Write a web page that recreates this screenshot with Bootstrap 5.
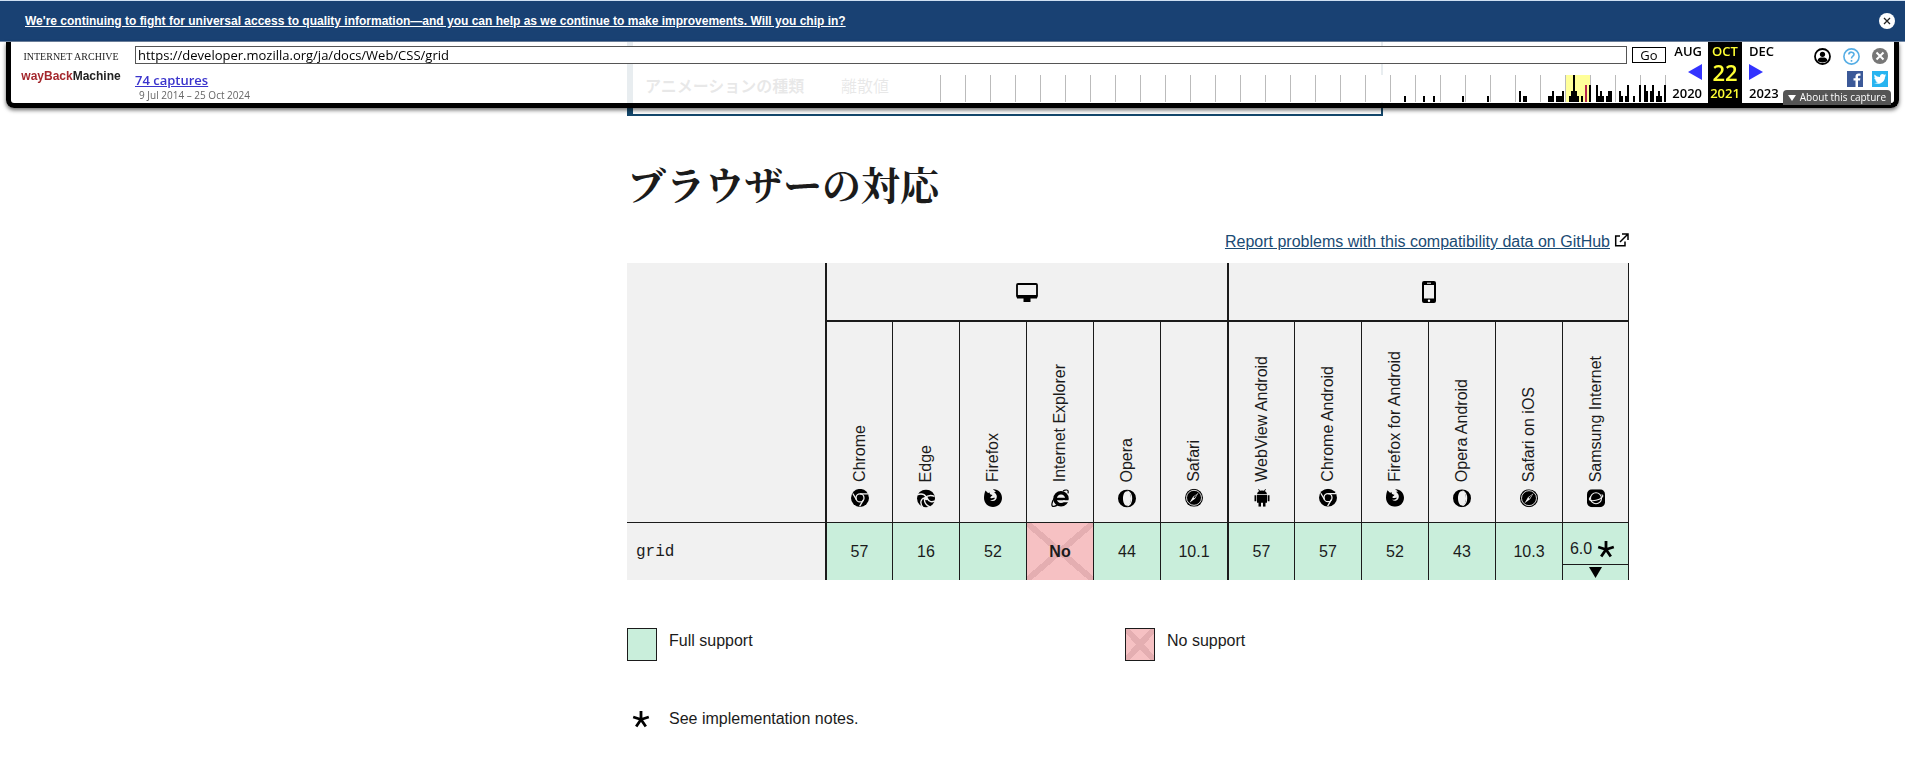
<!DOCTYPE html>
<html lang="ja">
<head>
<meta charset="utf-8">
<meta name="viewport" content="width=device-width, initial-scale=1">
<title>grid - CSS | MDN</title>
<link href="https://cdn.jsdelivr.net/npm/bootstrap@5.3.0/dist/css/bootstrap.min.css" rel="stylesheet">
<style>
  :root { --ink: #1b1b1b; --navy: #194173; --mdn-blue: #14476b; --yes: #c9eedb; --no: #f6c1c3; --cross: #e4aeb1; }
  body { font-family: "Liberation Sans", "Noto Sans CJK JP", sans-serif; color: var(--ink); background: #fff; }
  button, input { border-radius: 0; }

  /* donation banner */
  .donate { background: var(--navy); border-top: 1px solid #cfe0f2; border-bottom: 1px solid #7288a5; height: 42px; padding: 0 10px 0 25px; }
  .donate a { color: #fff; font-size: 12px; font-weight: 700; line-height: 16px; }
  .round-close { width: 16px; height: 16px; }

  /* archive toolbar */
  .wm-bar { margin: 0 6px; height: 66px; border: solid #000; border-width: 0 5px 5px; border-radius: 0 0 8px 8px; background: rgba(255,255,255,.9); box-shadow: 0 2px 4px rgba(0,0,0,.6); font-family: "Open Sans", "Noto Sans", sans-serif; color: #000; }
  .wm-logo { width: 100px; margin: 0 14px 0 10px; padding-top: 10px; color: #222; text-decoration: none; }
  .wm-logo .org { font-family: "Liberation Serif", serif; font-size: 10px; line-height: 10px; }
  .wm-logo .name { font-family: "Liberation Sans", sans-serif; font-size: 12px; line-height: 28px; font-weight: 700; }
  .wm-logo .red { color: #a4272d; }
  .wm-url { height: 18px; border: 1px solid #555; padding: 0 2px; font-size: 13px; line-height: 16px; min-width: 0; background: #fff; color: #000; }
  .wm-go { width: 34px; height: 16px; border: 1px solid #000; background: #fff; padding: 0; font-size: 13px; line-height: 14px; }
  .wm-count { font-size: 13px; font-weight: 600; line-height: 16px; color: #3a33cc; }
  .wm-range { font-size: 10px; line-height: 14px; color: #666; padding-left: 4px; }
  .spark { width: 726px; height: 27px; background: #fff; margin-bottom: 1px; }
  .wm-date { font-size: 13px; font-weight: 600; line-height: 18px; width: 42px; }
  .wm-date.now { width: 34px; background: #000; color: #ff3; }
  .wm-date .day { font-size: 22px; line-height: 24px; }
  .wm-date .arrow { height: 24px; }
  .wm-tools { width: 110px; padding: 5px 6px 0 0; }
  .wm-tools .tool-row { height: 18px; }
  .about { right: 3px; bottom: -2px; height: 15px; border: 0; border-radius: 4px 4px 0 0; background: #555; color: #fff; font-size: 10px; line-height: 15px; padding: 0 5px; }

  /* article */
  .page-wrap { max-width: 1353px; }
  .side { width: 351px; }
  .props { max-width: 756px; height: 116px; border: 2px solid var(--mdn-blue); border-left-width: 6px; border-top: 0; padding: 75px 12px 0; font-size: 16px; line-height: 24px; }
  .props dt { width: 196px; }
  h2.section-title { font-size: 39px; line-height: 48px; font-weight: 700; font-family: "Noto Serif CJK JP", "Noto Sans CJK JP", serif; padding: 43px 0 22px; }
  .report { line-height: 24px; height: 34px; gap: 4px; padding-top: 1px; }
  .report a { color: #1a4b74; }
  .report svg { margin-top: 3px; }

  .bc { table-layout: fixed; border-collapse: separate; border-spacing: 0; background: #f1f1f1; }
  .bc th, .bc td { padding: 0; text-align: center; font-weight: 400; border-left: 1px solid var(--ink); }
  .bc .feature { width: 198px; border-left: 0; }
  .bc .edge { border-left-width: 2px; }
  .bc .last { border-right: 1px solid var(--ink); }
  .bc .platform { height: 59px; border-bottom: 2px solid var(--ink); }
  .bc .browser { height: 201px; border-bottom: 1px solid var(--ink); vertical-align: bottom; padding-bottom: 8px; }
  .bc .corner { border-bottom: 1px solid var(--ink); }
  .bc tbody th, .bc tbody td { height: 57px; line-height: 24px; }
  .bc tbody th { text-align: left; padding-left: 9px; }
  .bc code { font-family: "Liberation Mono", monospace; font-size: 16px; color: var(--ink); }
  .bc .yes { background: var(--yes); }
  .cross { --a: calc(50% - 3px); --b: calc(50% + 3px); background: linear-gradient(to top right, transparent var(--a), var(--cross) var(--a) var(--b), transparent var(--b)), linear-gradient(to bottom right, transparent var(--a), var(--cross) var(--a) var(--b), transparent var(--b)), var(--no); }
  .vlabel { writing-mode: vertical-rl; transform: rotate(180deg); line-height: 24px; font-size: 16px; gap: 7px; }
  .vlabel svg { transform: rotate(180deg); }
  .expand { width: 100%; height: 57px; border: 0; background: none; color: var(--ink); padding: 0; }
  .expand .ver { height: 42px; padding: 10px 6px 0 0; border-bottom: 1px solid var(--ink); }
  .expand .more { height: 15px; }

  .legend { padding-top: 48px; line-height: 26px; }
  .legend .item { width: 498px; max-width: 50%; height: 78px; gap: 12px; }
  .swatch { width: 30px; height: 33px; border: 1px solid var(--ink); flex: none; }
  .swatch.bare { border: 0; padding: 4px 2px 0 0; }
</style>
</head>
<body>

<svg width="0" height="0" class="position-absolute" aria-hidden="true">
  <symbol id="chrome" viewBox="0 0 18 18">
    <circle cx="9" cy="9" r="9"/><circle cx="9" cy="9" r="4" fill="none" stroke="#f1f1f1" stroke-width="1.3"/>
    <path d="M9 5H17M5.600 11 1.800 4.600M12.400 11 8.600 17.500" stroke="#f1f1f1" stroke-width="1.300" fill="none"/>
  </symbol>
  <symbol id="edge" viewBox="0 0 18 18">
    <circle cx="9" cy="9" r="9"/>
    <path d="M0 5.500C4 4 7.500 5 9 7.500M17.500 7C14 5.500 10.500 6 7.500 8.500M13 17.500C9 16 7 13 7.500 8.500M6 18C2.500 14 3.500 9.500 7.500 8.500M10.500 9.500C12 12.500 15 13 18 11.500" stroke="#f1f1f1" stroke-width="1.400" fill="none"/><circle cx="9.300" cy="9" r="1.800" fill="#f1f1f1"/>
  </symbol>
  <symbol id="firefox" viewBox="0 0 18 18">
    <path d="M1.500 1.500 4 4 6 3.500C5 5 7 6 8.500 6 8 7.500 6 7.500 6.500 9 8 10 9 8.500 11 9 10 11.500 6 11 6 11 10 14 14 10 12.500 6 11.500 4 10 3 10 3L12 3C11 2 10 1 9 .500 14 0 18 4 18 9 18 14 14 18 9 18S0 14 0 9C0 6 .500 4 1.500 1.500Z"/>
  </symbol>
  <symbol id="ie" viewBox="0 0 18 18">
    <circle cx="10" cy="9.500" r="6" fill="none" stroke="#000" stroke-width="3.500"/><path d="M5 8.500H17V11H5Z"/><path d="M12 11h7v2h-7z" fill="#f1f1f1"/>
    <path d="M4 8C0 13 0 18 3 17 4 17 6 16 7 15M12 1.800C15 0 18 0 17 4" fill="none" stroke="#000" stroke-width="1.200"/>
  </symbol>
  <symbol id="opera" viewBox="0 0 18 18">
    <path fill-rule="evenodd" d="M9 0a9 9 0 1 0 0 18A9 9 0 1 0 9 0ZM9 1.800C11.500 1.800 13 5 13 9S11.500 16.200 9 16.200 5 13 5 9 6.500 1.800 9 1.800Z"/>
    <path d="M9.500 1.500C15 4 15 14 9.500 16.500" fill="none" stroke="#f1f1f1" stroke-width="1.200"/>
  </symbol>
  <symbol id="safari" viewBox="0 0 18 18">
    <circle cx="9" cy="9" r="9"/><circle cx="9" cy="9" r="7.500" fill="none" stroke="#f1f1f1" stroke-width=".900"/>
    <path d="M13.500 4 8 8 10 10ZM4.500 14 8 8 10 10Z" fill="#f1f1f1"/><path d="M12.500 5 8.500 8.500 9.500 9.500Z" fill="#000"/>
  </symbol>
  <symbol id="android" viewBox="0 0 18 18">
    <path d="M4 5.500C4.500 3 6 1.800 9 1.800S13.500 3 14 5.500ZM4 6.200H14V14H4ZM1.500 6.500h1.800v6H1.500ZM14.700 6.500h1.800v6h-1.800ZM5.500 13h2.500v5H5.500ZM10 13h2.500v5H10Z"/><path d="M5.500.500 7 3M12.500.500 11 3" stroke="#000"/>
  </symbol>
  <symbol id="samsung" viewBox="0 0 18 18">
    <rect width="18" height="18" rx="5"/><circle cx="9" cy="9" r="5.500" fill="none" stroke="#f1f1f1" stroke-width="1.100"/>
    <path d="M4 7C0 11 4 12 9 11S18 6 14.500 5.500" fill="none" stroke="#f1f1f1" stroke-width="1.100"/>
  </symbol>
  <symbol id="star" viewBox="0 0 18 18">
    <path d="M9 9.500V1M9 9.500 1.200 7M9 9.500 16.800 7M9 9.500 4.200 16.500M9 9.500 13.800 16.500" stroke="#000" stroke-width="2.800"/>
  </symbol>
</svg>

<header class="fixed-top">
  <div class="donate d-flex align-items-center justify-content-between">
    <a href="#">We're continuing to fight for universal access to quality information—and you can help as we continue to make improvements. Will you chip in?</a>
    <button type="button" class="btn p-0 border-0 d-flex" aria-label="Close banner">
      <svg class="round-close" viewBox="0 0 16 16"><circle cx="8" cy="8" r="8" fill="#fff"/><path d="m5 5 6 6m0-6-6 6" stroke="#222" stroke-width="1.300"/></svg>
    </button>
  </div>

  <div class="wm-bar d-flex position-relative">
    <a href="#" class="wm-logo d-flex flex-column align-items-center text-nowrap flex-shrink-0">
      <span class="org">INTERNET ARCHIVE</span>
      <span class="name"><span class="red">wayBack</span>Machine</span>
    </a>
    <div class="flex-grow-1 d-flex flex-column">
      <form class="d-flex align-items-center pt-1" style="gap:5px">
        <input class="wm-url flex-grow-1" type="text" aria-label="URL" value="https://developer.mozilla.org/ja/docs/Web/CSS/grid">
        <button type="button" class="wm-go">Go</button>
      </form>
      <div class="d-flex justify-content-between flex-grow-1">
        <div class="d-flex flex-column pt-2">
          <a href="#" class="wm-count">74 captures</a>
          <span class="wm-range">9 Jul 2014 – 25 Oct 2024</span>
        </div>
        <svg class="spark align-self-end flex-shrink-0" viewBox="0 0 726 27" shape-rendering="crispEdges" role="img" aria-label="Captures per month">
          <rect x="625" width="25" height="27" fill="#ff9"/>
          <path stroke="#bbb" d="M.5 0v27m25-27v27m25-27v27m25-27v27m25-27v27m25-27v27m25-27v27m25-27v27m25-27v27m25-27v27m25-27v27m25-27v27m25-27v27m25-27v27m25-27v27m25-27v27m25-27v27m25-27v27m25-27v27m25-27v27m25-27v27m25-27v27m25-27v27m25-27v27m25-27v27m25-27v27m25-27v27m25-27v27m25-27v27m25-27v27"/>
          <path d="M464 27v-6h2v6zM483 27v-6h2v6zM493 27v-6h2v6zM522 27v-6h2v6zM547 27v-6h2v6zM579 27v-11h2v11zM583 27v-6h4v6zM608 27v-6h4v-5h2v11zM616 27v-6h6v-5h2v11zM629 27v-6h2v-5h2v-16h2v16h2v5h2v6zM641 27v-6h2v6zM649 27v-17h2v17zM656 27v-17h2v11h2v-5h2v5h2v6zM666 27v-6h2v-5h4v11zM679 27v-11h2v5h2v6zM685 27v-6h2v-11h2v17zM693 27v-6h2v6zM699 27v-17h2v17zM704 27v-17h2v6h2v11zM710 27v-11h2v-6h2v17zM716 27v-6h2v-5h2v11zM724 27v-17h2v17zM720 27v-6h2v6z"/>
          <path fill="#b8264f" d="M645 10h2v17h-2z"/>
        </svg>
      </div>
    </div>

    <div class="wm-date d-flex flex-column align-items-end flex-shrink-0" style="padding-right:6px">
      <span>AUG</span>
      <a href="#" class="arrow d-flex align-items-center" aria-label="Previous capture"><svg width="14" height="16" viewBox="0 0 14 16"><path d="M14 0v16L0 8z" fill="#33f"/></svg></a>
      <span>2020</span>
    </div>
    <div class="wm-date now d-flex flex-column align-items-center flex-shrink-0">
      <span>OCT</span><span class="day">22</span><span>2021</span>
    </div>
    <div class="wm-date d-flex flex-column align-items-start flex-shrink-0" style="padding-left:7px">
      <span>DEC</span>
      <a href="#" class="arrow d-flex align-items-center" aria-label="Next capture"><svg width="14" height="16" viewBox="0 0 14 16"><path d="M0 0v16l14-8z" fill="#33f"/></svg></a>
      <span>2023</span>
    </div>
    <div class="wm-tools d-flex flex-column flex-shrink-0" style="row-gap:5px">
      <div class="tool-row d-flex justify-content-end align-items-center" style="column-gap:12px">
        <svg width="17" height="17" viewBox="0 0 17 17"><circle cx="8.500" cy="8.500" r="7.500" fill="#fff" stroke="#000" stroke-width="1.800"/><circle cx="8.500" cy="6.300" r="2.600"/><path d="M3.500 12.800C4 10 6 9.500 8.500 9.500S13 10 13.500 12.800C11 15 6 15 3.500 12.800Z"/></svg>
        <svg width="17" height="17" viewBox="0 0 17 17"><circle cx="8.500" cy="8.500" r="7.600" fill="#fff" stroke="#56aee5" stroke-width="1.600"/><path d="M5.800 6.500C6 3.300 11.200 3.500 11 6.500 10.800 8.300 8.500 8.200 8.500 10.500M8.500 12v1.800" fill="none" stroke="#56aee5" stroke-width="1.600"/></svg>
        <svg width="16" height="16" viewBox="0 0 16 16"><circle cx="8" cy="8" r="8" fill="#777"/><path d="m4.500 4.500 7 7m0-7-7 7" stroke="#fff" stroke-width="2"/></svg>
      </div>
      <div class="tool-row d-flex justify-content-end align-items-center" style="column-gap:9px">
        <svg width="16" height="16" viewBox="0 0 16 16"><path fill="#3b5998" d="M0 0h16v16H0z"/><path fill="#fff" d="M8.500 16V9.500h-2V7.300h2V5.500C8.500 3.500 9.700 2.500 11.500 2.500h2v2.200h-1.300C11.200 4.700 11 5.100 11 5.800v1.500h2.400l-.400 2.200h-2V16z"/></svg>
        <svg width="16" height="16" viewBox="0 0 16 16"><path fill="#28b4f0" d="M0 0h16v16H0z"/><path fill="#fff" d="M2.500 3.500C4 5.200 6 6 8 6 7.700 3.500 10.500 2.200 12.200 3.800L14 3.200 13 4.700 14.300 4.400 13 5.800C13 11 8 14.500 2 12 4 12 5 11.700 5.800 11 4.500 11 3.600 10.200 3.300 9.200H4.500C3 8.700 2.300 7.700 2.300 6.400L3.400 6.700C2.200 5.800 2 4.700 2.500 3.500Z"/></svg>
      </div>
    </div>
    <button type="button" class="about position-absolute d-flex align-items-center gap-1"><svg width="8" height="6" viewBox="0 0 8 6"><path d="M0 0h8L4 6z" fill="#fff"/></svg>About this capture</button>
  </div>
</header>

<div class="page-wrap mx-auto d-flex">
  <aside class="side flex-shrink-0"></aside>
  <main class="flex-grow-1">
    <dl class="props d-flex mb-0">
      <dt>アニメーションの種類</dt>
      <dd class="mb-0">離散値</dd>
    </dl>

    <h2 class="section-title mb-0">ブラウザーの対応</h2>

    <div class="report d-flex justify-content-end align-items-start">
      <a href="#">Report problems with this compatibility data on GitHub</a>
      <svg width="15" height="15" viewBox="0 0 15 15"><path d="M6 3H1.700v9.800H11V8.500M8 1h6v6M14 1 6 9" fill="none" stroke="#000" stroke-width="1.500"/></svg>
    </div>

    <table class="bc w-100">
      <thead>
        <tr>
          <td class="feature corner" rowspan="2"></td>
          <th class="platform edge" colspan="6" scope="colgroup" aria-label="desktop"><svg width="22" height="19" viewBox="0 0 22 19"><rect x="1" y="1" width="20" height="13" rx="1" fill="none" stroke="#000" stroke-width="1.800"/><path d="M1 12h20v3.500H1zM7.500 15h7v4h-7z"/></svg></th>
          <th class="platform edge last" colspan="6" scope="colgroup" aria-label="mobile"><svg width="14" height="22" viewBox="0 0 14 22"><path fill-rule="evenodd" d="M2 0h10q2 0 2 2v18q0 2-2 2H2q-2 0-2-2V2Q0 0 2 0ZM2 4v13.500h10V4Z"/><path d="M5 2.200h4" stroke="#fff"/><circle cx="7" cy="19.800" r="1.200" fill="#fff"/></svg></th>
        </tr>
        <tr>
          <th class="browser edge" scope="col"><span class="vlabel d-inline-flex align-items-center"><svg width="18" height="18"><use href="#chrome"/></svg>Chrome</span></th>
          <th class="browser" scope="col"><span class="vlabel d-inline-flex align-items-center"><svg width="18" height="18"><use href="#edge"/></svg>Edge</span></th>
          <th class="browser" scope="col"><span class="vlabel d-inline-flex align-items-center"><svg width="18" height="18"><use href="#firefox"/></svg>Firefox</span></th>
          <th class="browser" scope="col"><span class="vlabel d-inline-flex align-items-center"><svg width="18" height="18"><use href="#ie"/></svg>Internet Explorer</span></th>
          <th class="browser" scope="col"><span class="vlabel d-inline-flex align-items-center"><svg width="18" height="18"><use href="#opera"/></svg>Opera</span></th>
          <th class="browser" scope="col"><span class="vlabel d-inline-flex align-items-center"><svg width="18" height="18"><use href="#safari"/></svg>Safari</span></th>
          <th class="browser edge" scope="col"><span class="vlabel d-inline-flex align-items-center"><svg width="18" height="18"><use href="#android"/></svg>WebView Android</span></th>
          <th class="browser" scope="col"><span class="vlabel d-inline-flex align-items-center"><svg width="18" height="18"><use href="#chrome"/></svg>Chrome Android</span></th>
          <th class="browser" scope="col"><span class="vlabel d-inline-flex align-items-center"><svg width="18" height="18"><use href="#firefox"/></svg>Firefox for Android</span></th>
          <th class="browser" scope="col"><span class="vlabel d-inline-flex align-items-center"><svg width="18" height="18"><use href="#opera"/></svg>Opera Android</span></th>
          <th class="browser" scope="col"><span class="vlabel d-inline-flex align-items-center"><svg width="18" height="18"><use href="#safari"/></svg>Safari on iOS</span></th>
          <th class="browser last" scope="col"><span class="vlabel d-inline-flex align-items-center"><svg width="18" height="18"><use href="#samsung"/></svg>Samsung Internet</span></th>
        </tr>
      </thead>
      <tbody>
        <tr>
          <th class="feature" scope="row"><code>grid</code></th>
          <td class="yes edge">57</td>
          <td class="yes">16</td>
          <td class="yes">52</td>
          <td class="cross fw-bold">No</td>
          <td class="yes">44</td>
          <td class="yes">10.1</td>
          <td class="yes edge">57</td>
          <td class="yes">57</td>
          <td class="yes">52</td>
          <td class="yes">43</td>
          <td class="yes">10.3</td>
          <td class="yes last"><button type="button" class="expand d-flex flex-column" aria-label="6.0, see notes">
            <span class="ver w-100 d-flex align-items-center justify-content-center" style="gap:5px">6.0 <svg width="18" height="18"><use href="#star"/></svg></span>
            <span class="more w-100 d-flex align-items-center justify-content-center"><svg width="13" height="11" viewBox="0 0 13 11"><path d="M0 0h13L6.500 11z"/></svg></span>
          </button></td>
        </tr>
      </tbody>
    </table>

    <div class="legend d-flex flex-wrap">
      <div class="item d-flex"><span class="swatch" style="background:var(--yes)"></span><span>Full support</span></div>
      <div class="item d-flex"><span class="swatch cross"></span><span>No support</span></div>
      <div class="item d-flex"><span class="swatch bare d-flex justify-content-center"><svg width="18" height="18"><use href="#star"/></svg></span><span>See implementation notes.</span></div>
    </div>
  </main>
</div>

<script src="https://cdn.jsdelivr.net/npm/bootstrap@5.3.0/dist/js/bootstrap.bundle.min.js"></script>
</body>
</html>
